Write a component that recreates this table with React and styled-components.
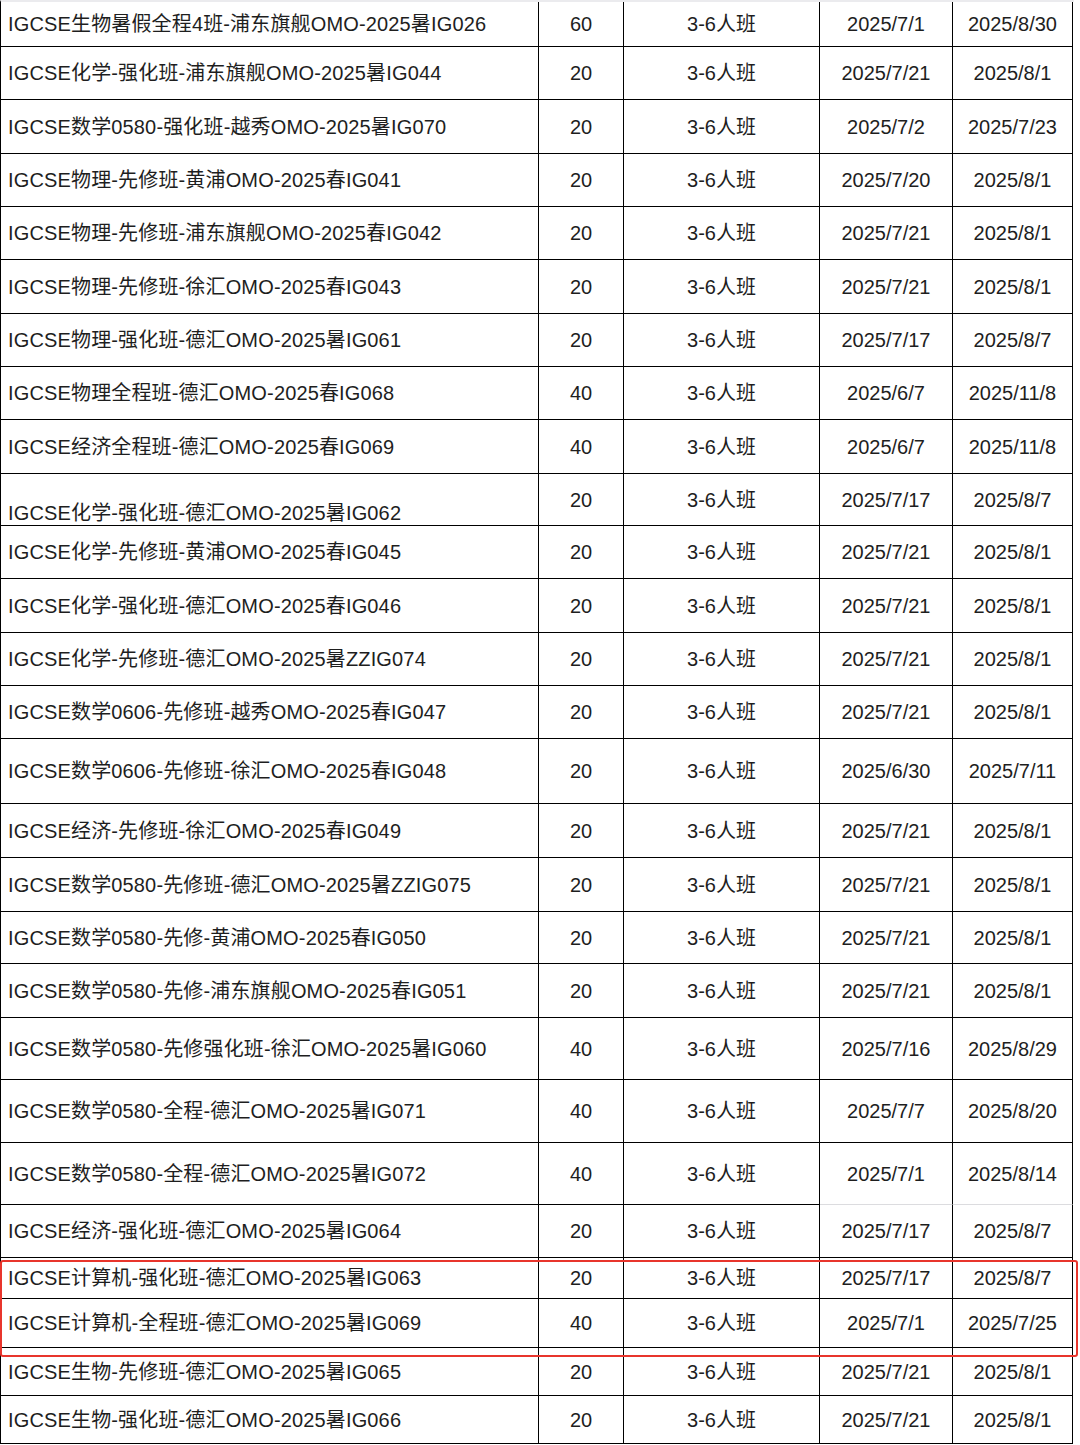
import React from 'react';
import styled, { createGlobalStyle } from 'styled-components';

const GlobalStyle = createGlobalStyle`
  html, body {
    margin: 0;
    padding: 0;
    background: #ffffff;
  }
  body {
    font-family: "Liberation Sans", "Noto Sans CJK SC", Arial, sans-serif;
    color: #1e1e1e;
  }
`;

// --- STYLES ---
const Sheet = styled.div`
  width: 1074px;
  border-top: 2px solid #ebebee;
  border-left: 1px solid #000;
  box-sizing: border-box;
`;

const Row = styled.div`
  display: grid;
  grid-template-columns: 538px 85px 196px 133px 120px;
  height: ${({ h }) => h}px;
`;

const Cell = styled.div`
  display: flex;
  align-items: ${({ bottom }) => (bottom ? 'flex-end' : 'center')};
  justify-content: ${({ left }) => (left ? 'flex-start' : 'center')};
  padding: ${({ left, bottom }) => (left ? `0 0 ${bottom ? 2 : 0}px 7px` : '0')};
  letter-spacing: ${({ left }) => (left ? '0.15px' : '0')};
  border-right: 1px solid #000;
  border-bottom: 1px solid ${({ light }) => (light ? '#dcdcdf' : '#000')};
  font-size: 20px;
  line-height: 1;
  white-space: nowrap;
  overflow: hidden;
`;

const Highlight = styled.div`
  position: relative;

  &::after {
    content: '';
    position: absolute;
    top: 2px;
    left: -1px;
    right: -4px;
    bottom: -9px;
    border: 2px solid #e8352c;
    border-radius: 3px;
    pointer-events: none;
  }
`;

// --- DATA ---
const ROWS = [
  { name: 'IGCSE生物暑假全程4班-浦东旗舰OMO-2025暑IG026', hours: 60, start: '2025/7/1', end: '2025/8/30', h: 45 },
  { name: 'IGCSE化学-强化班-浦东旗舰OMO-2025暑IG044', hours: 20, start: '2025/7/21', end: '2025/8/1', h: 53 },
  { name: 'IGCSE数学0580-强化班-越秀OMO-2025暑IG070', hours: 20, start: '2025/7/2', end: '2025/7/23', h: 54 },
  { name: 'IGCSE物理-先修班-黄浦OMO-2025春IG041', hours: 20, start: '2025/7/20', end: '2025/8/1', h: 53 },
  { name: 'IGCSE物理-先修班-浦东旗舰OMO-2025春IG042', hours: 20, start: '2025/7/21', end: '2025/8/1', h: 53 },
  { name: 'IGCSE物理-先修班-徐汇OMO-2025春IG043', hours: 20, start: '2025/7/21', end: '2025/8/1', h: 54 },
  { name: 'IGCSE物理-强化班-德汇OMO-2025暑IG061', hours: 20, start: '2025/7/17', end: '2025/8/7', h: 53 },
  { name: 'IGCSE物理全程班-德汇OMO-2025春IG068', hours: 40, start: '2025/6/7', end: '2025/11/8', h: 53 },
  { name: 'IGCSE经济全程班-德汇OMO-2025春IG069', hours: 40, start: '2025/6/7', end: '2025/11/8', h: 54 },
  { name: 'IGCSE化学-强化班-德汇OMO-2025暑IG062', hours: 20, start: '2025/7/17', end: '2025/8/7', h: 52, bottom: true },
  { name: 'IGCSE化学-先修班-黄浦OMO-2025春IG045', hours: 20, start: '2025/7/21', end: '2025/8/1', h: 53 },
  { name: 'IGCSE化学-强化班-德汇OMO-2025春IG046', hours: 20, start: '2025/7/21', end: '2025/8/1', h: 54 },
  { name: 'IGCSE化学-先修班-德汇OMO-2025暑ZZIG074', hours: 20, start: '2025/7/21', end: '2025/8/1', h: 53 },
  { name: 'IGCSE数学0606-先修班-越秀OMO-2025春IG047', hours: 20, start: '2025/7/21', end: '2025/8/1', h: 53 },
  { name: 'IGCSE数学0606-先修班-徐汇OMO-2025春IG048', hours: 20, start: '2025/6/30', end: '2025/7/11', h: 65 },
  { name: 'IGCSE经济-先修班-徐汇OMO-2025春IG049', hours: 20, start: '2025/7/21', end: '2025/8/1', h: 54 },
  { name: 'IGCSE数学0580-先修班-德汇OMO-2025暑ZZIG075', hours: 20, start: '2025/7/21', end: '2025/8/1', h: 54 },
  { name: 'IGCSE数学0580-先修-黄浦OMO-2025春IG050', hours: 20, start: '2025/7/21', end: '2025/8/1', h: 52 },
  { name: 'IGCSE数学0580-先修-浦东旗舰OMO-2025春IG051', hours: 20, start: '2025/7/21', end: '2025/8/1', h: 54 },
  { name: 'IGCSE数学0580-先修强化班-徐汇OMO-2025暑IG060', hours: 40, start: '2025/7/16', end: '2025/8/29', h: 62 },
  { name: 'IGCSE数学0580-全程-德汇OMO-2025暑IG071', hours: 40, start: '2025/7/7', end: '2025/8/20', h: 63 },
  { name: 'IGCSE数学0580-全程-德汇OMO-2025暑IG072', hours: 40, start: '2025/7/1', end: '2025/8/14', h: 62, lightDates: true },
  { name: 'IGCSE经济-强化班-德汇OMO-2025暑IG064', hours: 20, start: '2025/7/17', end: '2025/8/7', h: 53 },
];

// rows circled in red
const MARKED = [
  { name: 'IGCSE计算机-强化班-德汇OMO-2025暑IG063', hours: 20, start: '2025/7/17', end: '2025/8/7', h: 41 },
  { name: 'IGCSE计算机-全程班-德汇OMO-2025暑IG069', hours: 40, start: '2025/7/1', end: '2025/7/25', h: 49 },
];

const TAIL = [
  { name: 'IGCSE生物-先修班-德汇OMO-2025暑IG065', hours: 20, start: '2025/7/21', end: '2025/8/1', h: 48 },
  { name: 'IGCSE生物-强化班-德汇OMO-2025暑IG066', hours: 20, start: '2025/7/21', end: '2025/8/1', h: 48 },
];

const CourseRow = ({ row }) => (
  <Row h={row.h}>
    <Cell left bottom={row.bottom}>{row.name}</Cell>
    <Cell>{row.hours}</Cell>
    <Cell>3-6人班</Cell>
    <Cell light={row.lightDates}>{row.start}</Cell>
    <Cell light={row.lightDates}>{row.end}</Cell>
  </Row>
);

// --- PAGE ---
const App = () => (
  <>
    <GlobalStyle />
    <Sheet>
      {ROWS.map(row => <CourseRow key={row.name} row={row} />)}
      <Highlight>
        {MARKED.map(row => <CourseRow key={row.name} row={row} />)}
      </Highlight>
      {TAIL.map(row => <CourseRow key={row.name} row={row} />)}
    </Sheet>
  </>
);

export default App;
